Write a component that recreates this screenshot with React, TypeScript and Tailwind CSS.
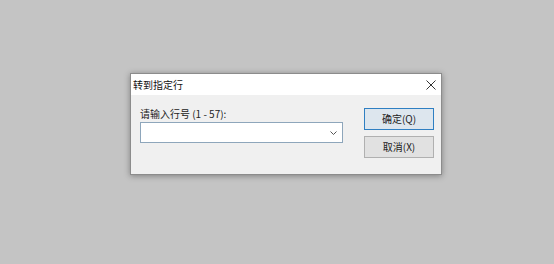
import React from "react";

export default function App() {
  const font = { fontFamily: '"Noto Sans CJK SC", "Noto Sans", sans-serif' };
  return (
    <div
      className="w-[554px] h-[264px] bg-[#c4c4c4] flex items-start pl-[130px] pt-[73px] text-[10px] text-[#1a1a1a]"
      style={font}
    >
      <div className="w-[312px] h-[102px] border border-[#8c8c8c] bg-[#f0f0f0] shadow-[0_1px_6px_rgba(0,0,0,0.35)] flex flex-col">
        <div className="h-[21px] bg-white flex items-center justify-between pl-[2px] pr-[4px]">
          <span className="leading-[12px] text-[10px] text-[#111]">转到指定行</span>
          <svg width="10" height="10" viewBox="0 0 10 10" className="mr-[1px]">
            <path d="M0.5 0.5 L9.5 9.5 M9.5 0.5 L0.5 9.5" stroke="#333" strokeWidth="1" fill="none" />
          </svg>
        </div>
        <div className="flex flex-1 pt-[13px] pl-[9px]">
          <div className="flex flex-col w-[203px]">
            <div className="leading-[12px] h-[12px] mb-[2px] text-[#222]">请输入行号 (1 - 57):</div>
            <div className="h-[21px] bg-white border border-[#8ea6bb] flex items-center justify-end pr-[5px]">
              <svg width="7" height="4" viewBox="0 0 7 4">
                <path d="M0.5 0.5 L3.5 3.5 L6.5 0.5" stroke="#555" strokeWidth="1" fill="none" />
              </svg>
            </div>
          </div>
          <div className="flex flex-col ml-[21px] w-[70px] gap-[6px]">
            <div className="h-[22px] border border-[#2f7fc2] bg-[#dde6ee] flex items-center justify-center leading-[12px] text-[#222]">
              确定(Q)
            </div>
            <div className="h-[22px] border border-[#b0b0b0] bg-[#e1e1e1] flex items-center justify-center leading-[12px] text-[#222]">
              取消(X)
            </div>
          </div>
        </div>
      </div>
    </div>
  );
}
